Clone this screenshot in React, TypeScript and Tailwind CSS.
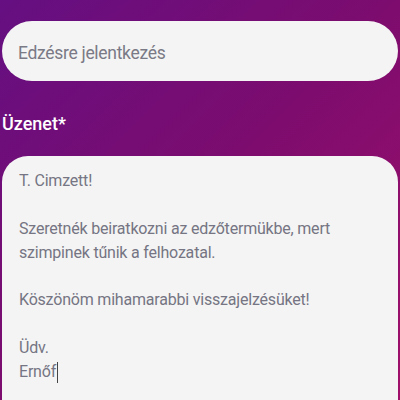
import React from "react";

export default function App() {
  const lines = [
    "T. Cimzett!",
    "",
    "Szeretnék beiratkozni az edzőtermükbe, mert",
    "szimpinek tűnik a felhozatal.",
    "",
    "Köszönöm mihamarabbi visszajelzésüket!",
    "",
    "Üdv.",
  ];
  return (
    <div
      className="w-[400px] h-[400px] overflow-hidden bg-[linear-gradient(135deg,#650f82_0%,#7d0c6e_50%,#a0106a_100%)] px-[2px] pt-[21px]"
      style={{ fontFamily: "Roboto, 'Liberation Sans', sans-serif" }}
    >
      <div className="h-[60px] w-[396px] rounded-[30px] bg-[#f4f4f4] flex items-center pl-[16px] pt-[4px] text-[17.5px] text-[#7a7a86] tracking-[-0.3px]">
        Edzésre jelentkezés
      </div>
      <div className="mt-[32px] text-[18px] leading-[22px] font-medium text-white">
        Üzenet*
      </div>
      <div className="mt-[21px] w-[396px] h-[300px] rounded-t-[26px] bg-[#f4f4f4] pl-[17px] pt-[13px] text-[16px] leading-[23.9px] text-[#757583] tracking-[-0.2px]">
        {lines.map((l, i) => (
          <div key={i} className="h-[23.9px]">
            {l}
          </div>
        ))}
        <div className="h-[23.9px] flex items-center">
          <span>Ernőf</span>
          <span className="inline-block w-[1px] h-[21px] bg-[#444] ml-[1px]" />
        </div>
      </div>
    </div>
  );
}
